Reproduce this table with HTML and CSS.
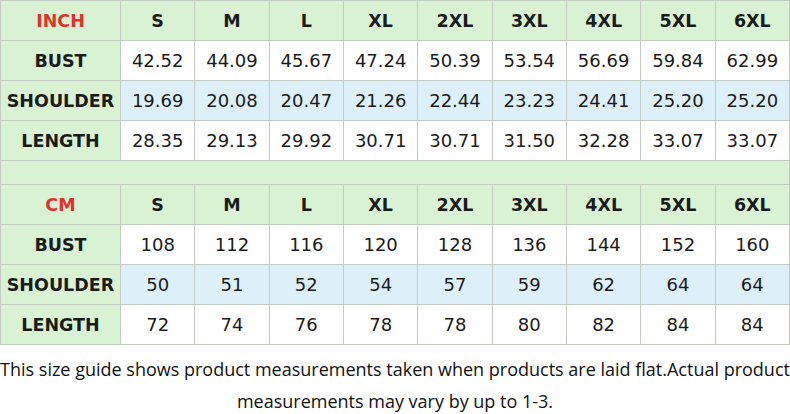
FILE: index.html
```html
<!DOCTYPE html>
<html>
<head>
<meta charset="utf-8">
<link rel="stylesheet" href="styles.css">
</head>
<body>
<table class="chart">
  <colgroup><col class="c-label"><col><col><col><col><col><col><col><col><col></colgroup>
  <tr class="head"><th class="unit">INCH</th><th>S</th><th>M</th><th>L</th><th>XL</th><th>2XL</th><th>3XL</th><th>4XL</th><th>5XL</th><th>6XL</th></tr>
  <tr class="row"><th>BUST</th><td>42.52</td><td>44.09</td><td>45.67</td><td>47.24</td><td>50.39</td><td>53.54</td><td>56.69</td><td>59.84</td><td>62.99</td></tr>
  <tr class="row blue"><th>SHOULDER</th><td>19.69</td><td>20.08</td><td>20.47</td><td>21.26</td><td>22.44</td><td>23.23</td><td>24.41</td><td>25.20</td><td>25.20</td></tr>
  <tr class="row"><th>LENGTH</th><td>28.35</td><td>29.13</td><td>29.92</td><td>30.71</td><td>30.71</td><td>31.50</td><td>32.28</td><td>33.07</td><td>33.07</td></tr>
  <tr class="spacer"><td colspan="10"></td></tr>
  <tr class="head"><th class="unit">CM</th><th>S</th><th>M</th><th>L</th><th>XL</th><th>2XL</th><th>3XL</th><th>4XL</th><th>5XL</th><th>6XL</th></tr>
  <tr class="row"><th>BUST</th><td>108</td><td>112</td><td>116</td><td>120</td><td>128</td><td>136</td><td>144</td><td>152</td><td>160</td></tr>
  <tr class="row blue"><th>SHOULDER</th><td>50</td><td>51</td><td>52</td><td>54</td><td>57</td><td>59</td><td>62</td><td>64</td><td>64</td></tr>
  <tr class="row"><th>LENGTH</th><td>72</td><td>74</td><td>76</td><td>78</td><td>78</td><td>80</td><td>82</td><td>84</td><td>84</td></tr>
</table>
<p class="note">This size guide shows product measurements taken when products are laid flat.Actual product<br>measurements may vary by up to 1-3.</p>
</body>
</html>
```
FILE: styles.css
```css
html, body {
  margin: 0;
  padding: 0;
  background: #ffffff;
}
body {
  width: 790px;
  height: 414px;
  overflow: hidden;
}
.chart {
  width: 790px;
  border-collapse: collapse;
  table-layout: fixed;
  font-family: "DejaVu Sans", Verdana, sans-serif;
  color: #1b1b1b;
}
.c-label {
  width: 120px;
}
.chart th,
.chart td {
  height: 39px;
  padding: 0;
  border: 1px solid #c4cbc3;
  text-align: center;
  vertical-align: middle;
}
.chart th {
  font-weight: bold;
  font-size: 17.5px;
}
.chart td {
  font-weight: normal;
  font-size: 18px;
}
.head th {
  background: #d9f2d4;
}
.row th {
  background: #d9f2d4;
}
.row td {
  background: #ffffff;
}
.row.blue td {
  background: #ddf0fa;
}
.unit {
  color: #e0322b;
}
.spacer td {
  height: 23px;
  background: #d9f2d4;
}
.note {
  margin: 0;
  padding: 8px 0 0;
  font-family: "Open Sans", "Noto Sans", sans-serif;
  font-size: 18px;
  line-height: 32px;
  white-space: nowrap;
  text-align: center;
  color: #111111;
}
```
